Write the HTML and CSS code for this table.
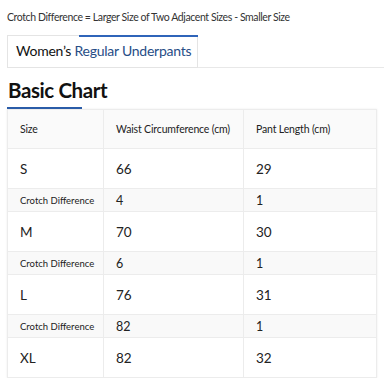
FILE: index.html
```html
<!DOCTYPE html>
<html>
<head>
<meta charset="utf-8">
<link rel="stylesheet" href="styles.css">
</head>
<body>
<div class="page">
  <p class="note">Crotch Difference = Larger Size of Two Adjacent Sizes - Smaller Size</p>
  <div class="tabs">
    <div class="tab"><span class="tab-indicator"></span>Women’s <span class="blue">Regular Underpants</span></div>
    <div class="tab-rest"></div>
  </div>
  <h2 class="title">Basic Chart</h2>
  <table class="chart">
    <thead>
      <tr><th class="c1">Size</th><th class="c2">Waist Circumference (cm)</th><th>Pant Length (cm)</th></tr>
    </thead>
    <tbody>
      <tr class="size"><td>S</td><td>66</td><td>29</td></tr>
      <tr class="diff"><td>Crotch Difference</td><td>4</td><td>1</td></tr>
      <tr class="size"><td>M</td><td>70</td><td>30</td></tr>
      <tr class="diff"><td>Crotch Difference</td><td>6</td><td>1</td></tr>
      <tr class="size"><td>L</td><td>76</td><td>31</td></tr>
      <tr class="diff"><td>Crotch Difference</td><td>82</td><td>1</td></tr>
      <tr class="size"><td>XL</td><td>82</td><td>32</td></tr>
    </tbody>
  </table>
</div>
</body>
</html>
```
FILE: styles.css
```css
* { box-sizing: border-box; }
html, body { margin: 0; padding: 0; background: #fff; }
body { font-family: Lato, "Noto Sans", sans-serif; color: #222; }
.page { padding: 0 7px 0 7px; }
.note {
  margin: 0;
  padding-top: 10px;
  height: 35px;
  font-size: 10.5px;
  letter-spacing: -0.4px;
  color: #333;
  line-height: 14px;
}
.tabs { display: flex; height: 33px; }
.tab {
  position: relative;
  width: 191px;
  border: 1px solid #e4e4e4;
  padding: 6px 0 0 8px;
  font-size: 14px;
  letter-spacing: -0.25px;
  line-height: 18px;
  color: #111;
  white-space: nowrap;
}
.tab-indicator {
  position: absolute;
  top: -1px;
  left: 71px;
  right: -1px;
  height: 2px;
  background: #2f64b9;
}
.blue { color: #274d86; }
.tab-rest { flex: 1; border-bottom: 1px solid #e8e8e8; margin-right: -7px; }
.title {
  margin: 8px 0 0 1px;
  font-size: 20.5px;
  letter-spacing: -0.4px;
  line-height: 28px;
  font-weight: 700;
  color: #111;
  padding-bottom: 5px;
  position: relative;
}
.title::after {
  content: "";
  position: absolute;
  left: -1px;
  bottom: 0;
  width: 75px;
  height: 2px;
  background: #2a5ca8;
}
.chart {
  width: 370px;
  border-collapse: collapse;
  box-shadow: 0 0 2px rgba(0,0,0,0.08);
  border: 1px solid #ececec;
}
.chart th, .chart td {
  border: 1px solid #ececec;
  text-align: left;
  padding: 0 0 0 12px;
  font-weight: 400;
  color: #222;
}
.chart th {
  background: #fafafa;
  font-size: 10.5px;
  letter-spacing: -0.15px;
  height: 39px;
}
.chart .c1 { width: 96px; }
.chart .c2 { width: 140px; }
.size td { font-size: 13.5px; height: 40px; background: #fff; }
.diff td { font-size: 9.5px; height: 23px; background: #f9f9f9; }
.diff td + td { font-size: 12.5px; }
```
